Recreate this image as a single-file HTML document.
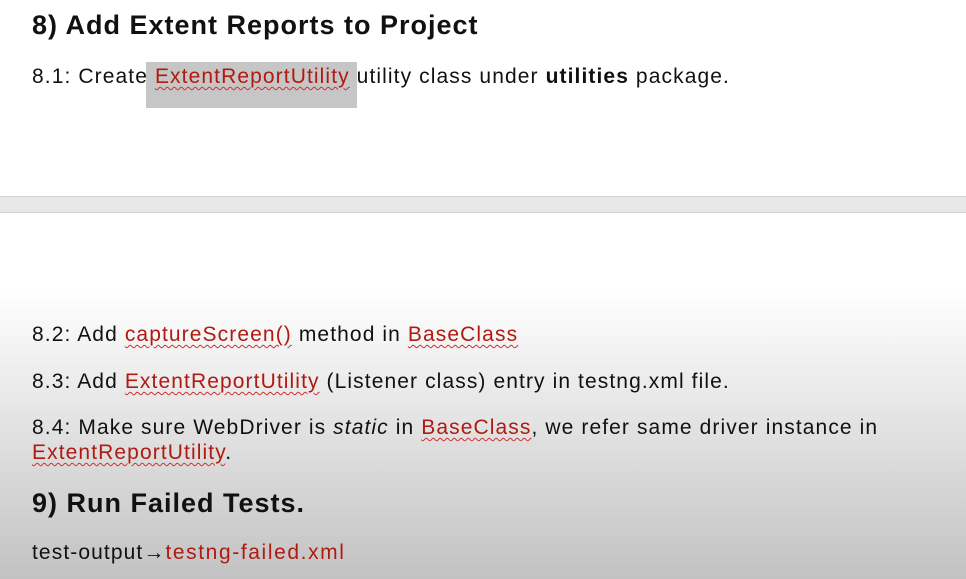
<!DOCTYPE html>
<html><head><style>
body{margin:0;width:966px;height:579px;overflow:hidden;position:relative;font-family:"Liberation Sans",sans-serif;color:#111;
background:linear-gradient(#fff 0,#fff 290px,#c2c2c2 579px);}
.top{position:absolute;left:0;top:0;width:966px;height:196px;background:#fff}
.band{position:absolute;left:0;top:196px;width:966px;height:15px;background:#e8e8ea;border-top:1px solid #d4d4d6;border-bottom:1px solid #d4d4d6}
.mid{position:absolute;left:0;top:213px;width:966px;height:80px;background:#fff}
.t{position:absolute;left:32px;white-space:nowrap;font-size:21px;letter-spacing:1.1px;line-height:24px}
.h{font-weight:bold;font-size:27px;letter-spacing:1px;line-height:30px}
.r{color:#b01a10;text-decoration:underline wavy #d03030 1px;text-underline-offset:3px}
.hl{position:absolute;left:146px;top:62px;width:211px;height:46px;background:#c6c6c6}
</style></head><body>
<div class="top"></div><div class="band"></div><div class="mid"></div>
<div class="hl"></div>
<div class="t h" style="top:10px">8) Add Extent Reports to Project</div>
<div class="t" style="top:65px">8.1: Create <span class="r">ExtentReportUtility</span> utility class under <b>utilities</b> package.</div>
<div class="t" style="top:323px">8.2: Add <span class="r">captureScreen()</span> method in <span class="r">BaseClass</span></div>
<div class="t" style="top:370px">8.3: Add <span class="r">ExtentReportUtility</span> (Listener class) entry in testng.xml file.</div>
<div class="t" style="top:416px">8.4: Make sure WebDriver is <i>static</i> in <span class="r">BaseClass</span>, we refer same driver instance in</div>
<div class="t" style="top:441px"><span class="r">ExtentReportUtility</span>.</div>
<div class="t h" style="top:488px">9) Run Failed Tests.</div>
<div class="t" style="top:541px">test-output→<span style="color:#b01a10;letter-spacing:1.6px">testng-failed.xml</span></div>
</body></html>
